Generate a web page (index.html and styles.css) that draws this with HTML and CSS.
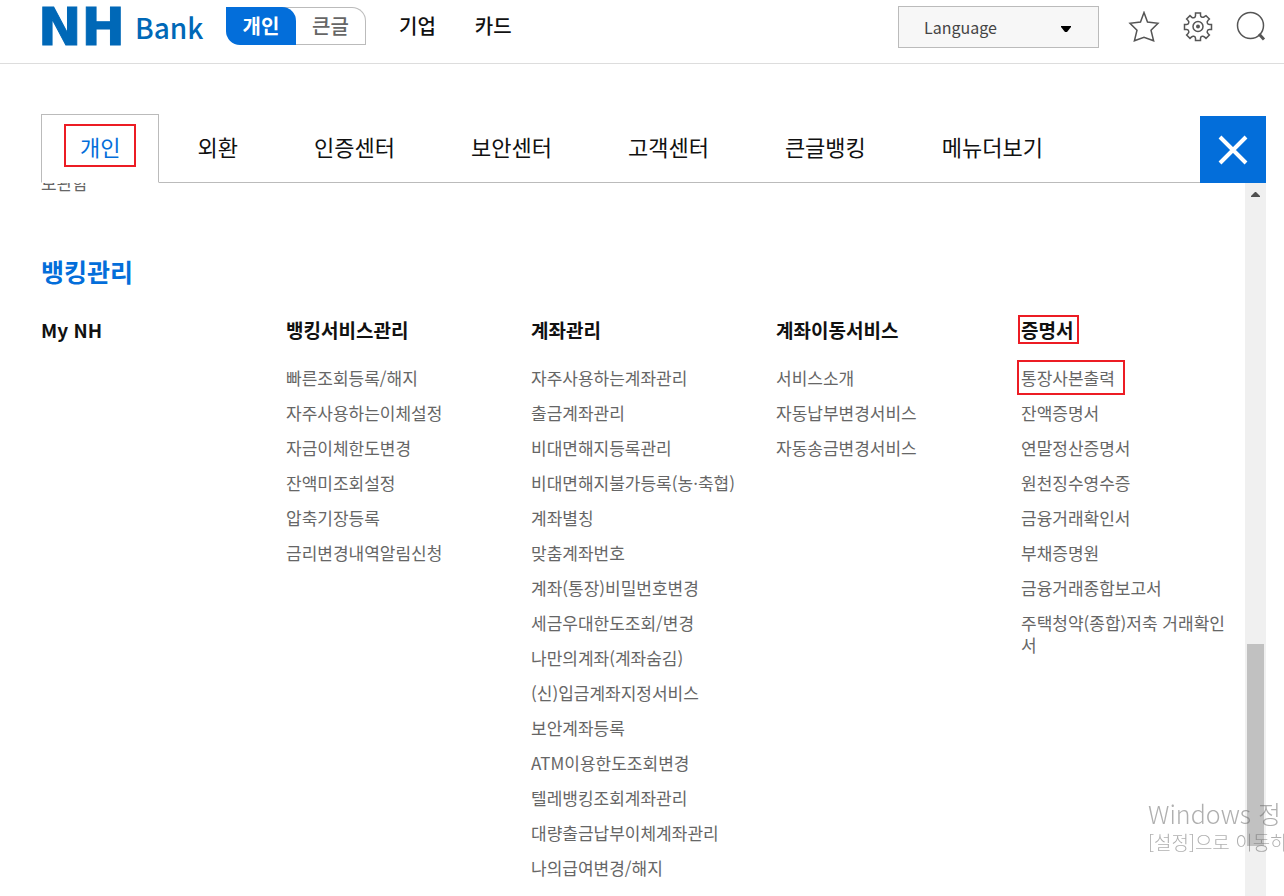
FILE: index.html
```html
<!DOCTYPE html>
<html lang="ko">
<head>
<meta charset="utf-8">
<title>NH Bank</title>
<link rel="stylesheet" href="styles.css">
</head>
<body>
<header class="header">
  <a class="logo" href="#"><span class="logo-mark">NH</span><span class="logo-name">Bank</span></a>
  <div class="mode">
    <button class="mode-button mode-active" type="button">개인</button>
    <button class="mode-button" type="button">큰글</button>
  </div>
  <nav class="sites">
    <a href="#">기업</a>
    <a href="#">카드</a>
  </nav>
  <div class="language">
    <select class="language-select" aria-label="Language"><option>Language</option></select>
    <svg class="language-arrow" width="10" height="6" viewBox="0 0 10 6" aria-hidden="true"><path d="M0 0h10v1L6 6H4L0 1z"/></svg>
  </div>
  <div class="tools">
    <button class="tool" type="button" aria-label="즐겨찾기">
      <svg width="32" height="32" viewBox="0 0 32 32"><path d="M16 1.500l3.500 9.500 10.500 1.200-7 7 2.600 10.600-9.600-3.600-9.600 3.600L9 19.200l-7-7L12.500 11z"/></svg>
    </button>
    <button class="tool" type="button" aria-label="설정">
      <svg width="32" height="32" viewBox="0 0 32 32"><path d="M13.500 2h5v2.200q0 1.500 1.500 2 1.300.5 2.400-.6L24 4.600 27.400 8l-1.500 1.600q-1.100 1.100-.6 2.400.5 1.500 2 1.500h2.200v5h-2.200q-1.500 0-2 1.500-.5 1.300.6 2.400l1.500 1.600-3.400 3.400-1.600-1.500q-1.100-1.100-2.400-.6-1.500.5-1.500 2v2.200h-5v-2.200q0-1.500-1.500-2-1.300-.5-2.400.6L8 27.400 4.600 24l1.500-1.600q1.100-1.100.6-2.400-.5-1.500-2-1.500H2.500v-5h2.200q1.500 0 2-1.500.5-1.300-.6-2.400L4.600 8 8 4.600l1.600 1.500q1.100 1.100 2.400.6 1.500-.5 1.500-2z"/><circle cx="16" cy="15.500" r="5"/><circle class="dot" cx="16" cy="15.500" r="2"/></svg>
    </button>
    <button class="tool" type="button" aria-label="검색">
      <svg width="32" height="32" viewBox="0 0 32 32"><circle cx="14.500" cy="14.500" r="13"/><path class="handle" d="M23 23l5 5.500"/></svg>
    </button>
  </div>
</header>

<main class="menu">
  <nav class="tabs">
    <a class="tab tab-active" href="#"><span class="tab-mark">개인</span></a>
    <a class="tab" href="#">외환</a>
    <a class="tab" href="#">인증센터</a>
    <a class="tab" href="#">보안센터</a>
    <a class="tab" href="#">고객센터</a>
    <a class="tab" href="#">큰글뱅킹</a>
    <a class="tab" href="#">메뉴더보기</a>
    <button class="close" type="button" aria-label="닫기">
      <svg width="32" height="32" viewBox="0 0 32 32"><path d="M3 3l26 26M29 3L3 29"/></svg>
    </button>
  </nav>

  <div class="panel">
    <a class="previous" href="#">보관함</a>
    <h2 class="title">뱅킹관리</h2>
    <div class="columns">
      <section class="column">
        <h3 class="heading">My NH</h3>
      </section>
      <section class="column">
        <h3 class="heading">뱅킹서비스관리</h3>
        <ul class="links">
          <li><a href="#">빠른조회등록/해지</a></li>
          <li><a href="#">자주사용하는이체설정</a></li>
          <li><a href="#">자금이체한도변경</a></li>
          <li><a href="#">잔액미조회설정</a></li>
          <li><a href="#">압축기장등록</a></li>
          <li><a href="#">금리변경내역알림신청</a></li>
        </ul>
      </section>
      <section class="column">
        <h3 class="heading">계좌관리</h3>
        <ul class="links">
          <li><a href="#">자주사용하는계좌관리</a></li>
          <li><a href="#">출금계좌관리</a></li>
          <li><a href="#">비대면해지등록관리</a></li>
          <li><a href="#">비대면해지불가등록(농·축협)</a></li>
          <li><a href="#">계좌별칭</a></li>
          <li><a href="#">맞춤계좌번호</a></li>
          <li><a href="#">계좌(통장)비밀번호변경</a></li>
          <li><a href="#">세금우대한도조회/변경</a></li>
          <li><a href="#">나만의계좌(계좌숨김)</a></li>
          <li><a href="#">(신)입금계좌지정서비스</a></li>
          <li><a href="#">보안계좌등록</a></li>
          <li><a href="#">ATM이용한도조회변경</a></li>
          <li><a href="#">텔레뱅킹조회계좌관리</a></li>
          <li><a href="#">대량출금납부이체계좌관리</a></li>
          <li><a href="#">나의급여변경/해지</a></li>
        </ul>
      </section>
      <section class="column">
        <h3 class="heading">계좌이동서비스</h3>
        <ul class="links">
          <li><a href="#">서비스소개</a></li>
          <li><a href="#">자동납부변경서비스</a></li>
          <li><a href="#">자동송금변경서비스</a></li>
        </ul>
      </section>
      <section class="column">
        <h3 class="heading"><span class="heading-mark">증명서</span></h3>
        <ul class="links">
          <li><a class="link-mark" href="#">통장사본출력</a></li>
          <li><a href="#">잔액증명서</a></li>
          <li><a href="#">연말정산증명서</a></li>
          <li><a href="#">원천징수영수증</a></li>
          <li><a href="#">금융거래확인서</a></li>
          <li><a href="#">부채증명원</a></li>
          <li><a href="#">금융거래종합보고서</a></li>
          <li><a href="#">주택청약(종합)저축 거래확인서</a></li>
        </ul>
      </section>
    </div>
    <div class="track" aria-hidden="true">
      <svg class="track-arrow" width="9" height="5" viewBox="0 0 9 5"><path d="M4 0h1l4 4v1H0V4z"/></svg>
      <div class="thumb"></div>
    </div>
  </div>
</main>

<div class="watermark">
  <p class="watermark-title">Windows 정</p>
  <p class="watermark-text">[설정]으로 이동하</p>
</div>
</body>
</html>
```
FILE: styles.css
```css
* { box-sizing: border-box; }

body {
  margin: 0;
  height: 100vh;
  display: flex;
  flex-direction: column;
  overflow: hidden;
  background: #fff;
  color: #111;
  font-family: "Noto Sans CJK KR", "Noto Sans", sans-serif;
}

a { color: inherit; text-decoration: none; }
button, select { font: inherit; margin: 0; padding: 0; border: 0; background: none; }
h2, h3, p, ul { margin: 0; padding: 0; }
ul { list-style: none; }

.header {
  flex: none;
  display: flex;
  align-items: flex-start;
  height: 64px;
  padding: 6px 16px 0 38px;
  border-bottom: 1px solid #ddd;
}

.logo {
  display: flex;
  align-items: center;
  gap: 10px;
  width: 188px;
  height: 42px;
  color: #0068b7;
  white-space: nowrap;
}
.logo-mark {
  font: bold 52px/42px "DejaVu Sans", sans-serif;
  -webkit-text-stroke: 1px #0068b7;
}
.logo-name { font-size: 28px; font-weight: 500; line-height: 42px; }

.mode {
  display: flex;
  width: 140px;
  height: 38px;
  margin-top: 1px;
  font-size: 20px;
  font-weight: 500;
}
.mode-button {
  flex: 1;
  margin-left: -14px;
  padding-left: 14px;
  border: 1px solid #bbb;
  border-left: 0;
  border-radius: 0 14px 0 0;
  line-height: 34px;
  color: #666;
}
.mode-active {
  position: relative;
  z-index: 1;
  flex: none;
  width: 70px;
  margin: 0;
  padding: 0;
  border: 0;
  border-radius: 0 14px 0 14px;
  background: #036eda;
  color: #fff;
  font-weight: 700;
}

.sites {
  display: flex;
  gap: 39px;
  padding-left: 33px;
  font-size: 20px;
  font-weight: 500;
  line-height: 40px;
}

.language { position: relative; width: 201px; height: 42px; margin-left: auto; }
.language-select {
  appearance: none;
  width: 100%;
  height: 100%;
  padding: 0 25px;
  border: 1px solid #bbb;
  border-radius: 0;
  background: #f7f7f7;
  color: #444;
  font-size: 16px;
}
.language-arrow { position: absolute; right: 28px; top: 20px; }

.tools { display: flex; gap: 22px; margin: 5px 0 0 29px; }
.tool { width: 32px; height: 32px; }
.tool svg { display: block; fill: none; stroke: #555; stroke-width: 1.5; }
.tool .dot { fill: #555; stroke: none; }
.tool .handle { stroke-width: 3; }

.menu {
  flex: 1;
  min-height: 0;
  display: flex;
  flex-direction: column;
  padding: 50px 18px 0 41px;
}

.tabs { flex: none; display: flex; align-items: flex-end; border-bottom: 1px solid #bbb; }
.tab { padding: 0 38px 4px; font-size: 22px; line-height: 63px; white-space: nowrap; }
.tab-active {
  margin-bottom: -1px;
  border: 1px solid #bbb;
  border-bottom-color: #fff;
  background: #fff;
  color: #036eda;
}
.close {
  display: grid;
  place-items: center;
  width: 66px;
  height: 67px;
  margin: 0 0 -1px auto;
  background: #036eda;
}
.close svg { fill: none; stroke: #fff; stroke-width: 4; }

.panel { position: relative; flex: 1; min-height: 0; overflow: hidden; }
.previous {
  display: block;
  margin: -11px 0 59px;
  font-size: 17px;
  line-height: 22px;
  color: #666;
}
.title { margin-bottom: 27px; font-size: 25px; line-height: 36px; color: #036eda; }
.columns { display: grid; grid-template-columns: repeat(5, minmax(0, 1fr)); }
.column { padding-right: 28px; }
.heading { margin-bottom: 23px; font-size: 19px; line-height: 28px; }
.links { display: flex; flex-direction: column; gap: 13px; font-size: 17px; line-height: 22px; color: #666; }

/* Red call-out frames */
.tab-mark, .heading-mark, .link-mark { position: relative; }
.tab-mark::after, .heading-mark::after, .link-mark::after {
  content: "";
  position: absolute;
  border: 2px solid #ec1c24;
}
.tab-mark::after { inset: -6px -16px -5px; }
.heading-mark::after { inset: -1px -6px -1px -3px; }
.link-mark::after { inset: -5px -10px -5px -4px; }

.track {
  position: absolute;
  top: 0;
  right: 0;
  bottom: 0;
  width: 21px;
  background: #f0f0f0;
}
.track-arrow { position: absolute; top: 9px; left: 6px; fill: #505050; }
.thumb { position: absolute; top: 64.7%; left: 2px; right: 2px; height: 28.3%; background: #c1c1c1; }

.watermark {
  position: fixed;
  right: 0;
  bottom: 40px;
  width: 136px;
  overflow: hidden;
  white-space: nowrap;
  color: rgba(110, 110, 110, 0.55);
  font-weight: 300;
}
.watermark-title { font-size: 25px; line-height: 30px; }
.watermark-text { font-size: 19px; line-height: 28px; }
```
